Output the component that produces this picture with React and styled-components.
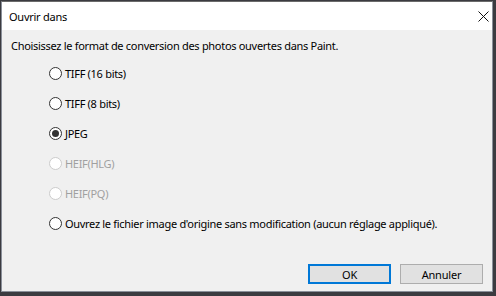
import React, { useState } from 'react';
import styled, { createGlobalStyle } from 'styled-components';

const GlobalStyle = createGlobalStyle`
  html, body {
    margin: 0;
    padding: 0;
    background: #3b3b40;
    font-family: "Noto Sans", "Liberation Sans", sans-serif;
  }
`;

const Frame = styled.div`
  width: 492px;
  height: 291px;
  margin: 1px 0 0 1px;
  border: 1px solid #8a8f99;
  border-top-color: #6b6b6b;
  display: flex;
  flex-direction: column;
  box-sizing: border-box;
  background: #f0f0f0;
`;

const TitleBar = styled.div`
  height: 28px;
  flex-shrink: 0;
  background: #ffffff;
  display: flex;
  align-items: center;
  justify-content: space-between;
  padding-left: 7px;
  font-size: 11px;
  letter-spacing: -0.25px;
  color: #000;
`;

const CloseButton = styled.div`
  width: 46px;
  height: 28px;
  display: flex;
  align-items: center;
  justify-content: center;
  margin-right: -14px;
`;

const Body = styled.div`
  flex: 1;
  display: flex;
  flex-direction: column;
  padding: 8px 9px 7px 9px;
  font-size: 11px;
  letter-spacing: -0.3px;
  color: #000;
`;

const Prompt = styled.div`
  line-height: 16px;
  margin-bottom: 4px;
`;

const OptionList = styled.div`
  display: flex;
  flex-direction: column;
  padding-left: 38px;
`;

const Option = styled.label`
  height: 30px;
  display: flex;
  align-items: center;
  gap: 3px;
  white-space: nowrap;
  color: ${p => (p.$disabled ? '#a0a0a0' : '#000')};
  cursor: ${p => (p.$disabled ? 'default' : 'pointer')};
`;

const Radio = styled.span`
  width: 13px;
  height: 13px;
  flex-shrink: 0;
  box-sizing: border-box;
  border-radius: 50%;
  border: 1px solid ${p => (p.$disabled ? '#cccccc' : '#333333')};
  background: #fff;
  display: flex;
  align-items: center;
  justify-content: center;
  &::after {
    content: '';
    width: 7px;
    height: 7px;
    border-radius: 50%;
    background: ${p => (p.$checked ? '#333333' : 'transparent')};
  }
`;

const Footer = styled.div`
  margin-top: auto;
  display: flex;
  justify-content: flex-end;
  gap: 9px;
`;

const Button = styled.button`
  width: 83px;
  height: 20px;
  box-sizing: border-box;
  font: inherit;
  font-size: 11px;
  letter-spacing: -0.2px;
  color: #000;
  background: #e1e1e1;
  border: 1px solid ${p => (p.$primary ? '#0078d7' : '#adadad')};
  box-shadow: ${p => (p.$primary ? 'inset 0 0 0 1px #0078d7' : 'none')};
  padding: 0;
`;

const options = [
  { label: 'TIFF (16 bits)' },
  { label: 'TIFF (8 bits)' },
  { label: 'JPEG' },
  { label: 'HEIF(HLG)', disabled: true },
  { label: 'HEIF(PQ)', disabled: true },
  { label: "Ouvrez le fichier image d'origine sans modification (aucun réglage appliqué)." },
];

export default function App() {
  const [selected, setSelected] = useState(2);
  return (
    <>
      <GlobalStyle />
      <Frame>
        <TitleBar>
          <span>Ouvrir dans</span>
          <CloseButton>
            <svg width="11" height="11" viewBox="0 0 11 11">
              <path d="M0.5 0.5 L10.5 10.5 M10.5 0.5 L0.5 10.5" stroke="#111" strokeWidth="1" fill="none" />
            </svg>
          </CloseButton>
        </TitleBar>
        <Body>
          <Prompt>Choisissez le format de conversion des photos ouvertes dans Paint.</Prompt>
          <OptionList>
            {options.map((o, i) => (
              <Option key={i} $disabled={o.disabled} onClick={() => !o.disabled && setSelected(i)}>
                <Radio $checked={selected === i} $disabled={o.disabled} />
                <span>{o.label}</span>
              </Option>
            ))}
          </OptionList>
          <Footer>
            <Button $primary>OK</Button>
            <Button>Annuler</Button>
          </Footer>
        </Body>
      </Frame>
    </>
  );
}
